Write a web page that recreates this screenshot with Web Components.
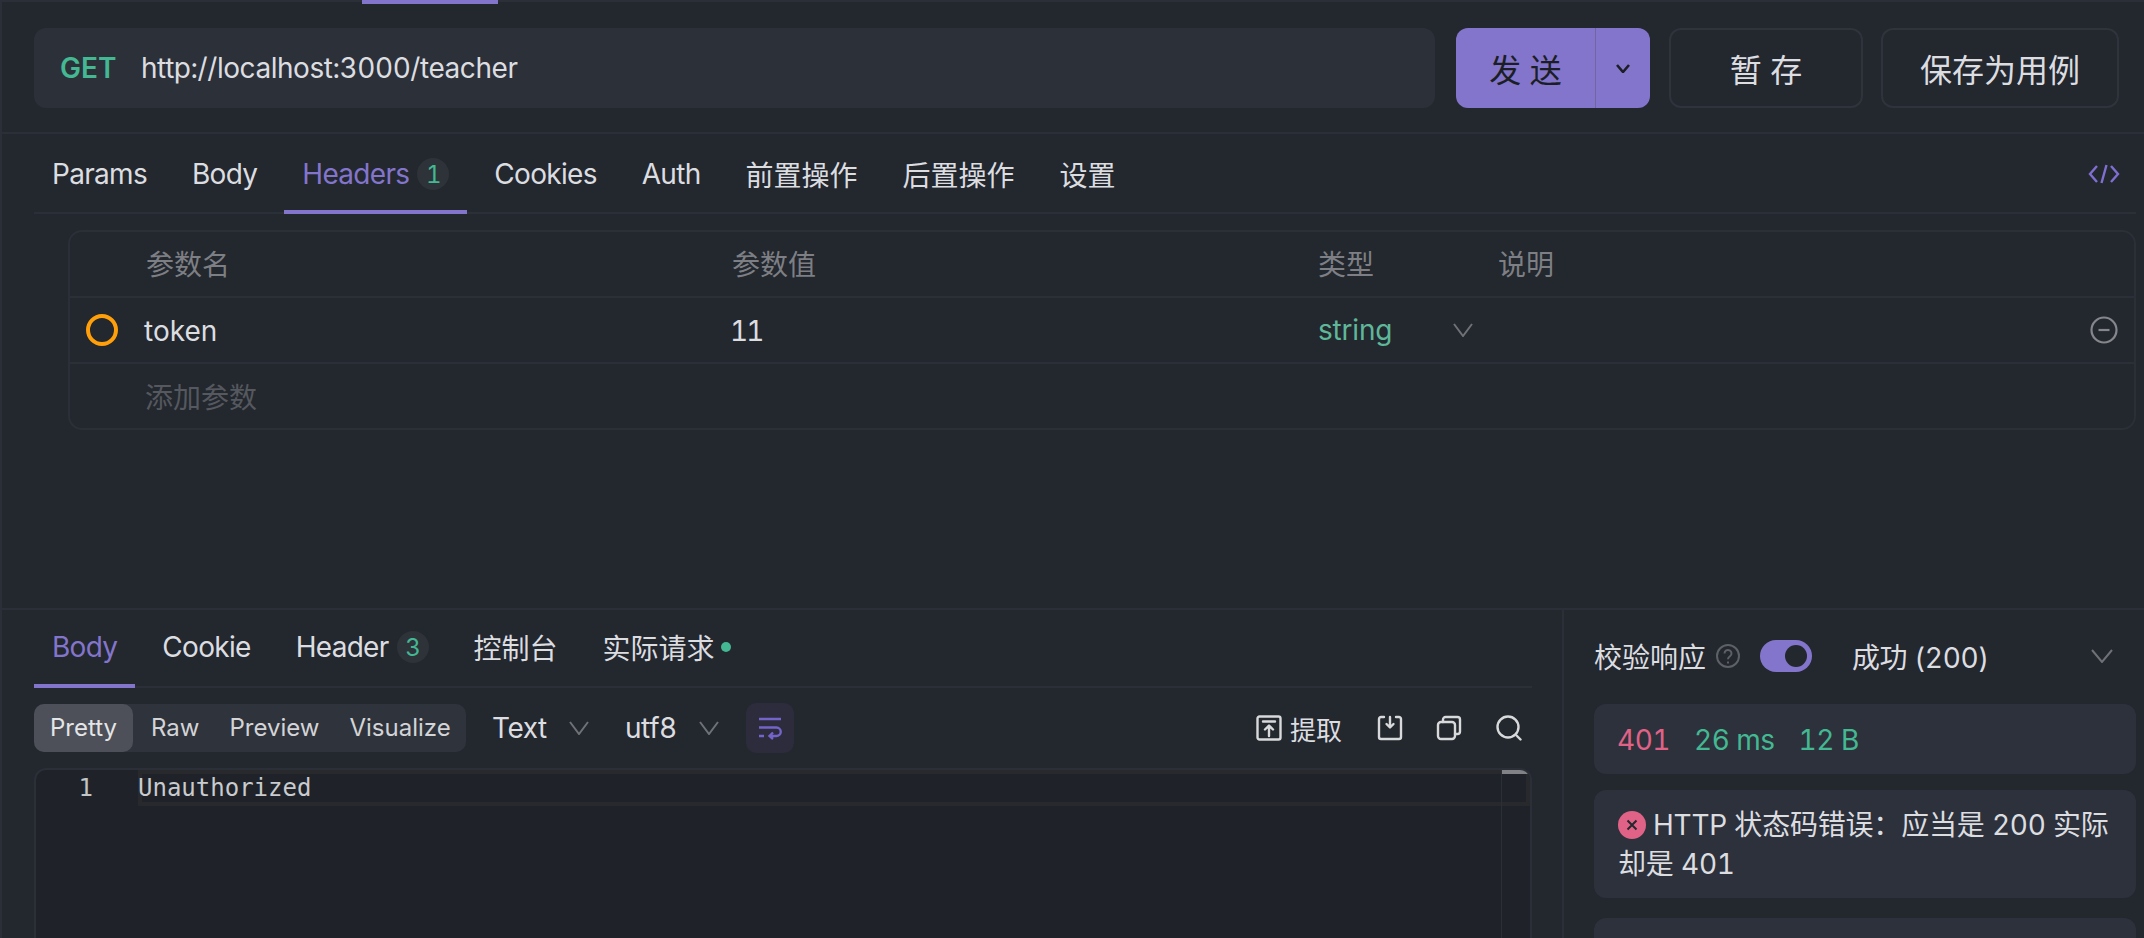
<!DOCTYPE html>
<html lang="zh">
<head>
<meta charset="utf-8">
<title>teacher</title>
<style>
  html, body { margin: 0; height: 100%; background: #23272e; overflow: hidden; }
  body { font: 28px Inter, "Noto Sans CJK SC", sans-serif; color: #dcdde0; letter-spacing: -0.45px; font-variant-numeric: tabular-nums; }
  tab-item.cjk { letter-spacing: 0; }
</style>
</head>
<body>
<api-page>
  <request-bar slot="request"></request-bar>
  <tab-bar slot="request" end-inset="8" style="--tab-pt: 2px">
    <tab-item>Params</tab-item>
    <tab-item>Body</tab-item>
    <tab-item active badge="1">Headers</tab-item>
    <tab-item>Cookies</tab-item>
    <tab-item>Auth</tab-item>
    <tab-item class="cjk">前置操作</tab-item>
    <tab-item class="cjk">后置操作</tab-item>
    <tab-item class="cjk">设置</tab-item>
    <svg slot="end" width="32" height="20" viewBox="0 0 32 20" fill="none" stroke="#7f6fd0" stroke-width="2.400"><path d="M9 2 2 10l7 8M23 2l7 8-7 8M18.500 1 13.500 19"/></svg>
  </tab-bar>
  <param-table slot="request"></param-table>
  <response-pane slot="response"></response-pane>
  <check-panel slot="check"></check-panel>
</api-page>

<script>
const chevron = (w, h, color, sw) => `<svg width="${w}" height="${h}" viewBox="0 0 ${w} ${h}" fill="none" stroke="${color}" stroke-width="${sw}"><path d="M1 1 ${w / 2} ${h - 1} ${w - 1} 1"/></svg>`;

class ApiPage extends HTMLElement {
  connectedCallback() {
    this.attachShadow({ mode: 'open' });
    this.shadowRoot.innerHTML = `
      <style>
        :host { display: flex; flex-direction: column; width: 2144px; height: 938px; box-sizing: border-box; border-left: 2px solid #2b2f38; }
        .strip { height: 4px; flex: none; box-sizing: border-box; border-top: 2px solid #2b2f38; margin-left: -2px; position: relative; }
        .strip i { display: block; width: 136px; height: 4px; margin: -2px 0 0 362px; background: #8375cc; }
        .req { flex: 1; min-height: 0; }
        .res { flex: none; height: 330px; display: flex; border-top: 2px solid #2b2f38; box-sizing: border-box; }
        .left { width: 1560px; flex: none; border-right: 2px solid #2b2f38; }
        .right { flex: 1; min-width: 0; }
      </style>
      <div class="strip"><i></i></div>
      <div class="req"><slot name="request"></slot></div>
      <div class="res">
        <div class="left"><slot name="response"></slot></div>
        <div class="right"><slot name="check"></slot></div>
      </div>`;
  }
}

class RequestBar extends HTMLElement {
  connectedCallback() {
    this.attachShadow({ mode: 'open' });
    this.shadowRoot.innerHTML = `
      <style>
        :host { display: flex; gap: 18px; padding: 24px 25px 24px 32px; border-bottom: 2px solid #2b2f38; }
        .url { flex: 1; height: 80px; box-sizing: border-box; background: #2c3039; border-radius: 12px; display: flex; align-items: center; padding-left: 26px; margin-right: 3px; }
        .get { color: #43b892; font-weight: 600; width: 81px; letter-spacing: 0; }
        .send { width: 194px; height: 80px; background: #8375cc; border-radius: 12px; display: flex; color: #1b1e24; align-items: center; margin-right: 1px; font-size: 32px; letter-spacing: 0; }
        .send b { font-weight: 400; width: 139px; text-align: center; }
        .send span { flex: 1; height: 100%; border-left: 1px solid #73659f; display: flex; align-items: center; justify-content: center; }
        .btn { height: 80px; box-sizing: border-box; border: 2px solid #2f333c; border-radius: 12px; display: flex; align-items: center; justify-content: center; font-size: 32px; letter-spacing: 0; }
        .save { width: 194px; }
        .case { width: 238px; }
      </style>
      <div class="url"><span class="get">GET</span><span>http://localhost:3000/teacher</span></div>
      <div class="send"><b>发 送</b><span>${chevron(14, 9, '#1b1e24', 2.6)}</span></div>
      <div class="btn save">暂 存</div>
      <div class="btn case">保存为用例</div>`;
  }
}

class TabBar extends HTMLElement {
  connectedCallback() {
    this.attachShadow({ mode: 'open' });
    const inset = this.getAttribute('end-inset') || 0;
    this.shadowRoot.innerHTML = `
      <style>
        :host { display: flex; align-items: stretch; gap: 9px; margin: 0 ${inset}px 0 32px; padding-right: 16px; border-bottom: 2px solid #2b2f38; height: var(--tabs-h, 78px); letter-spacing: -0.7px; }
        .end { margin-left: auto; display: flex; align-items: center; padding-top: 2px; }
      </style>
      <slot></slot>
      <div class="end"><slot name="end"></slot></div>`;
  }
}

class TabItem extends HTMLElement {
  connectedCallback() {
    this.attachShadow({ mode: 'open' });
    const badge = this.getAttribute('badge');
    const active = this.hasAttribute('active');
    this.shadowRoot.innerHTML = `
      <style>
        :host { display: flex; align-items: center; gap: 8px; padding: var(--tab-pt, 0) 18px var(--tab-pb, 0); height: 100%; box-sizing: border-box; position: relative; color: ${active ? '#8375cc' : '#dcdde0'}; }
        :host([active])::after { content: ""; position: absolute; left: 0; right: 0; bottom: -2px; height: 4px; background: #8375cc; }
        .badge { width: 32px; height: 32px; border-radius: 50%; background: #2e3339; color: #43b892; font-size: 24px; display: flex; align-items: center; justify-content: center; }
        .dot { width: 10px; height: 10px; border-radius: 50%; background: #43b892; margin-left: -2px; }
      </style>
      <slot></slot>${badge ? `<span class="badge">${badge}</span>` : ''}${this.hasAttribute('dot') ? '<span class="dot"></span>' : ''}`;
  }
}

class ParamTable extends HTMLElement {
  connectedCallback() {
    this.attachShadow({ mode: 'open' });
    this.shadowRoot.innerHTML = `
      <style>
        :host { display: block; margin: 16px 8px 0 66px; border: 2px solid #2b2f38; border-radius: 14px; letter-spacing: 0; }
        .row { display: grid; grid-template-columns: 76px 586px 586px 180px 1fr 44px; height: 64px; align-items: center; }
        .row + .row { border-top: 2px solid #2b2f38; height: 66px; box-sizing: border-box; }
        .head { color: #7d7f84; padding-bottom: 2px; box-sizing: border-box; }
        .c { display: flex; justify-content: center; padding-right: 12px; }
        .k { margin: 2px 0 0 -2px; }
        .n { margin: 2px 0 0 -2px; letter-spacing: -2px; }
        .type { color: #5fb79a; display: flex; align-items: center; gap: 61px; letter-spacing: -0.2px; }
        .ph { color: #55585e; margin-left: -1px; }
      </style>
      <div class="row head"><span></span><span>参数名</span><span>参数值</span><span>类型</span><span>说明</span></div>
      <div class="row">
        <span class="c"><svg width="32" height="32" viewBox="0 0 32 32" fill="none" stroke="#ff9f0a" stroke-width="4"><circle cx="16" cy="16" r="14"/></svg></span>
        <span class="k">token</span><span class="n">11</span>
        <span class="type">string ${chevron(20, 14, '#6e7176', 2)}</span>
        <span></span>
        <svg width="28" height="28" viewBox="0 0 28 28" fill="none" stroke="#85878c" stroke-width="2.200"><circle cx="14" cy="14" r="12.500"/><path d="M8.500 14h11"/></svg>
      </div>
      <div class="row"><span></span><span class="ph">添加参数</span></div>`;
  }
}

class ResponsePane extends HTMLElement {
  connectedCallback() {
    this.attachShadow({ mode: 'open' });
    this.shadowRoot.innerHTML = `
      <style>
        :host { display: block; --tabs-h: 76px; --tab-pb: 2px; }
        tab-bar { margin: 0 30px 0 32px; }
        .cjk { letter-spacing: 0; }
      </style>
      <tab-bar>
        <tab-item active>Body</tab-item>
        <tab-item>Cookie</tab-item>
        <tab-item badge="3">Header</tab-item>
        <tab-item class="cjk">控制台</tab-item>
        <tab-item class="cjk" dot>实际请求</tab-item>
      </tab-bar>
      <response-tools></response-tools>
      <code-view></code-view>`;
  }
}

class ResponseTools extends HTMLElement {
  connectedCallback() {
    this.attachShadow({ mode: 'open' });
    const ic = 'fill="none" stroke="#d8d9db" stroke-width="2.400" stroke-linecap="round" stroke-linejoin="round"';
    this.shadowRoot.innerHTML = `
      <style>
        :host { display: flex; align-items: center; margin: 16px 30px 0 32px; height: 48px; }
        .seg { display: flex; height: 48px; width: 432px; background: #2f333c; border-radius: 10px; font-size: 24px; color: #d3d4d7; align-items: center; letter-spacing: 0; }
        .seg span { padding: 0 16px; line-height: 48px; }
        .seg .on { background: #4d5058; border-radius: 10px; width: 100px; box-sizing: border-box; color: #e4e5e7; }
        .seg .raw { padding: 0 14px 0 18px; }
        .seg .vis { padding-left: 14px; }
        .sel { display: flex; align-items: center; gap: 22px; }
        .text { margin-left: 26px; width: 133px; }
        .enc { width: 121px; }
        .wrap { width: 48px; height: 50px; background: #2c2c3c; border-radius: 10px; display: flex; align-items: center; justify-content: center; }
        .wrap svg { overflow: visible; }
        .acts { margin-left: auto; display: flex; align-items: center; margin-right: 10px; }
        .acts svg { display: block; }
        .ex { display: flex; align-items: center; gap: 8px; margin-right: 35px; font-size: 26px; letter-spacing: 0; }
      </style>
      <div class="seg"><span class="on">Pretty</span><span class="raw">Raw</span><span>Preview</span><span class="vis">Visualize</span></div>
      <div class="sel text">Text ${chevron(20, 14, '#6e7176', 2)}</div>
      <div class="sel enc">utf8 ${chevron(20, 14, '#6e7176', 2)}</div>
      <div class="wrap"><svg width="24" height="22" viewBox="0 0 24 22" fill="none" stroke="#7463c8" stroke-width="2.400"><path d="M1 2h22M1 10.500h17.500a4 4 0 0 1 0 8.500H12M15 15.500 11.500 19l3.500 3M1 19h5"/></svg></div>
      <div class="acts">
        <div class="ex"><svg width="26" height="26" viewBox="0 0 26 26" ${ic}><rect x="1.500" y="1.500" width="23" height="23" rx="2"/><path d="M7 6.500h12M13 21V11M9 14.500 13 10.500l4 4"/></svg>提取</div>
        <svg width="26" height="26" viewBox="0 0 26 26" ${ic} style="margin-right:33px"><path d="M7 2H4a2 2 0 0 0-2 2v18a2 2 0 0 0 2 2h18a2 2 0 0 0 2-2V4a2 2 0 0 0-2-2h-3M13 2v10M9.500 9 13 12.500 16.500 9"/></svg>
        <svg width="26" height="26" viewBox="0 0 26 26" ${ic} style="margin-right:34px"><rect x="2" y="7" width="17" height="17" rx="3"/><path d="M7 7V4.500A2.500 2.500 0 0 1 9.500 2H21.500A2.500 2.500 0 0 1 24 4.500V16.500A2.500 2.500 0 0 1 21.500 19H19"/></svg>
        <svg width="26" height="26" viewBox="0 0 26 26" ${ic}><circle cx="12" cy="12" r="10.500"/><path d="m20.500 20.500 4 4"/></svg>
      </div>`;
  }
}

class CodeView extends HTMLElement {
  connectedCallback() {
    this.attachShadow({ mode: 'open' });
    this.shadowRoot.innerHTML = `
      <style>
        :host { display: flex; margin: 16px 30px 0 32px; height: 172px; box-sizing: border-box; border: 2px solid #2b2f38; border-bottom: 0; border-radius: 12px 12px 0 0; background: #1f2329; font: 24px "DejaVu Sans Mono", monospace; letter-spacing: 0; position: relative; overflow: hidden; }
        .gutter { width: 102px; flex: none; text-align: right; padding-right: 45px; box-sizing: border-box; line-height: 36px; color: #c2c4c8; }
        .code { flex: 1; height: 36px; box-sizing: border-box; border: 4px solid #27292c; border-right: 0; line-height: 28px; color: #c9cbce; text-indent: -4px; }
        .ruler { width: 28px; flex: none; border-left: 1px solid #2b2f38; position: relative; }
        .ruler i { position: absolute; left: 0; right: 0; top: 0; height: 4px; background: #808285; }
        .ruler b { display: block; height: 36px; box-sizing: border-box; border: solid #27292c; border-width: 4px 4px 4px 0; }
      </style>
      <div class="gutter">1</div>
      <div class="code">Unauthorized</div>
      <div class="ruler"><b></b><i></i></div>`;
  }
}

class CheckPanel extends HTMLElement {
  connectedCallback() {
    this.attachShadow({ mode: 'open' });
    this.shadowRoot.innerHTML = `
      <style>
        :host { display: block; padding: 0 8px 0 30px; letter-spacing: 0; }
        .head { display: flex; align-items: center; height: 92px; margin-bottom: 2px; }
        .help { margin: 0 20px 0 10px; }
        .toggle { width: 52px; height: 32px; border-radius: 16px; background: #8375cc; position: relative; flex: none; }
        .toggle::after { content: ""; position: absolute; right: 5px; top: 5px; width: 22px; height: 22px; border-radius: 50%; background: #23272e; }
        .ok { margin-left: 40px; letter-spacing: -0.4px; }
        .head svg:last-child { margin: 0 23px 0 auto; }
        .card { background: #2c313b; border-radius: 12px; padding: 0 24px; margin-bottom: 16px; box-sizing: border-box; }
        .stats { height: 70px; padding: 2px 0 0 23px; display: flex; align-items: center; color: #43b892; gap: 24px; letter-spacing: -0.5px; }
        .stats span:first-child { color: #e06287; }
        .err { height: 108px; padding-top: 16px; line-height: 39px; margin-bottom: 20px; letter-spacing: -0.2px; }
        .err i { display: inline-block; width: 28px; height: 28px; border-radius: 50%; background: #e06287; vertical-align: -4px; margin-right: 7px; }
        .err i svg { display: block; }
      </style>
      <div class="head">
        <span>校验响应</span>
        <svg class="help" width="24" height="24" viewBox="0 0 24 24" fill="none" stroke="#5d6065" stroke-width="2"><circle cx="12" cy="12" r="11"/><path d="M8.500 9.500a3.500 3.500 0 1 1 5.500 2.800c-1.300.9-2 1.500-2 3M12 17.500v2"/></svg>
        <span class="toggle"></span>
        <span class="ok">成功 (200)</span>
        ${chevron(22, 14, '#6e7176', 2)}
      </div>
      <div class="card stats"><span>401</span><span>26 ms</span><span>12 B</span></div>
      <div class="card err"><i><svg width="28" height="28" viewBox="0 0 28 28" fill="none" stroke="#23272e" stroke-width="2"><path d="m9.500 9.500 9 9M18.500 9.500l-9 9"/></svg></i>HTTP 状态码错误：应当是 200 实际却是 401</div>
      <div class="card" style="height:40px"></div>`;
  }
}

customElements.define('api-page', ApiPage);
customElements.define('request-bar', RequestBar);
customElements.define('tab-bar', TabBar);
customElements.define('tab-item', TabItem);
customElements.define('param-table', ParamTable);
customElements.define('response-pane', ResponsePane);
customElements.define('response-tools', ResponseTools);
customElements.define('code-view', CodeView);
customElements.define('check-panel', CheckPanel);
</script>
</body>
</html>
